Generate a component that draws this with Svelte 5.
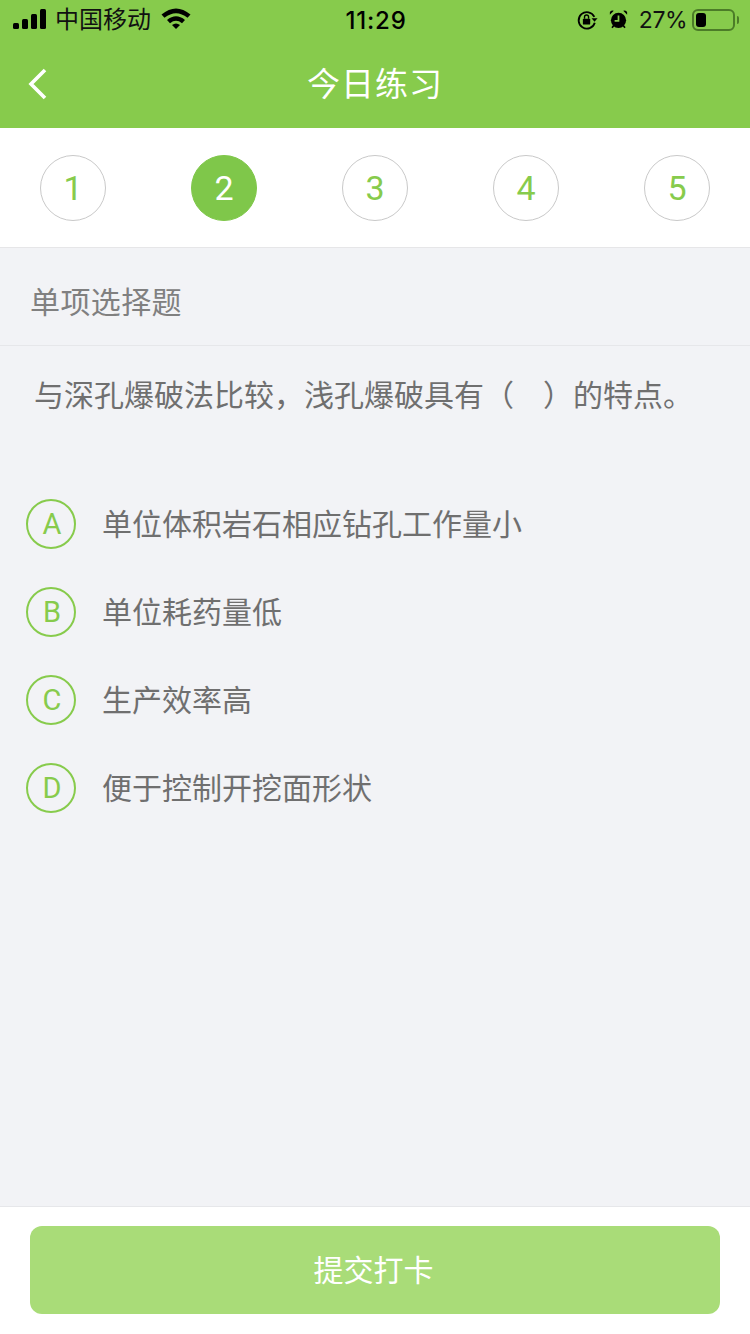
<script lang="ts">
  const steps = [1, 2, 3, 4, 5];
  const current = 2;
  const options = [
    { key: "A", text: "单位体积岩石相应钻孔工作量小" },
    { key: "B", text: "单位耗药量低" },
    { key: "C", text: "生产效率高" },
    { key: "D", text: "便于控制开挖面形状" },
  ];
</script>

<div class="page">
  <header class="head">
    <div class="status">
      <div class="status-left">
        <svg class="signal" width="34" height="20" viewBox="0 0 34 20">
          <rect x="0" y="14" width="6" height="6" rx="1.5" />
          <rect x="9" y="10" width="6" height="10" rx="1.5" />
          <rect x="18" y="5" width="6" height="15" rx="1.5" />
          <rect x="27" y="0" width="6" height="20" rx="1.5" />
        </svg>
        <span class="carrier">中国移动</span>
        <svg class="wifi" width="30" height="22" viewBox="0 0 30 22">
          <path d="M0.5 7.5 Q15 -4.5 29.5 7.5 L26.5 10.8 Q15 1.5 3.5 10.8Z" />
          <path d="M6 13 Q15 5.5 24 13 L21 16.2 Q15 11.5 9 16.2Z" />
          <path d="M11 18 Q15 15 19 18 L15 22Z" />
        </svg>
      </div>
      <span class="time">11:29</span>
      <div class="status-right">
        <svg width="22" height="22" viewBox="0 0 24 24" class="lock">
          <path d="M20 8.5 A9 9 0 1 0 20.5 15" fill="none" stroke="#000" stroke-width="2" />
          <path d="M17 10 L23.5 10 L20.2 14Z" />
          <rect x="7.5" y="10.5" width="8" height="6.5" rx="1" />
          <path d="M9.3 10.5 V8.8 A2.2 2.2 0 0 1 13.7 8.8 V10.5" fill="none" stroke="#000" stroke-width="1.5" />
        </svg>
        <svg width="19" height="21" viewBox="0 0 22 24" class="alarm">
          <circle cx="11" cy="13" r="8.8" />
          <path d="M1 6.5 L5.5 2 Q2 1 1 3.5Z M21 6.5 L16.5 2 Q20 1 21 3.5Z" />
          <path d="M3.5 21.5 L5.5 19 M18.5 21.5 L16.5 19" stroke="#000" stroke-width="2" />
          <path d="M11 7.5 V13.5 H6.5" fill="none" stroke="#87cb4c" stroke-width="2" />
        </svg>
        <span class="pct">27%</span>
        <div class="battery"><i class="level"></i></div>
        <i class="nub"></i>
      </div>
    </div>
    <div class="nav">
      <svg class="back" width="20" height="32" viewBox="0 0 20 32">
        <path d="M17 2 L3 16 L17 30" fill="none" stroke="#fff" stroke-width="3.6" />
      </svg>
      <span class="title">今日练习</span>
    </div>
  </header>

  <div class="steps">
    {#each steps as n}
      <span class="step" class:on={n === current}>{n}</span>
    {/each}
  </div>

  <main class="body">
    <div class="kind"><span>单项选择题</span></div>
    <p class="question">与深孔爆破法比较，浅孔爆破具有（<span class="blank"></span>）的特点。</p>
    <ul class="options">
      {#each options as o}
        <li class="option">
          <span class="letter">{o.key}</span>
          <span class="text">{o.text}</span>
        </li>
      {/each}
    </ul>
  </main>

  <footer class="foot">
    <button class="submit">提交打卡</button>
  </footer>
</div>

<style>
  :global(body) { margin: 0; }
  .page {
    position: relative;
    width: 750px;
    height: 1334px;
    display: flex;
    flex-direction: column;
    background: #f2f3f6;
    font-family: "Inter", "Noto Sans CJK SC", sans-serif;
    overflow: hidden;
  }
  .head { height: 128px; background: #87cb4c; flex: none; }
  .status {
    height: 40px;
    display: grid;
    grid-template-columns: 1fr auto 1fr;
    align-items: center;
    padding: 0 11px 0 13px;
    color: #000;
  }
  .status-left { display: flex; align-items: center; }
  .signal { fill: #000; margin-top: -2px; }
  .carrier { font-size: 24px; margin-left: 8px; color: #111; line-height: 40px; }
  .wifi { fill: #000; margin-left: 10px; margin-top: -4px; }
  .time { font-size: 24px; font-weight: 500; letter-spacing: 0.8px; }
  .status-right { display: flex; align-items: center; justify-content: flex-end; }
  .lock { fill: #000; }
  .alarm { fill: #000; margin-left: 11px; margin-top: -2px; }
  .pct { font-size: 23px; margin-left: 11px; color: #111; letter-spacing: -0.5px; }
  .battery {
    width: 43px;
    height: 22px;
    margin-left: 5px;
    border: 2px solid #4c7c28;
    border-radius: 6px;
    padding: 2px;
    box-sizing: border-box;
    display: flex;
  }
  .level { width: 10px; background: #000; border-radius: 3px; }
  .nub { width: 2px; height: 8px; margin-left: 2px; background: #4c7c28; border-radius: 0 2px 2px 0; }
  .nav { position: relative; height: 88px; display: flex; align-items: center; justify-content: center; margin-top: -2px; }
  .back { position: absolute; left: 28px; top: 30px; }
  .title { color: #fff; font-size: 33px; letter-spacing: 1px; }
  .steps {
    height: 120px;
    flex: none;
    box-sizing: border-box;
    background: #fff;
    border-bottom: 1px solid #e6e6e8;
    padding: 27px 40px 0;
    display: flex;
    justify-content: space-between;
    align-items: flex-start;
  }
  .step {
    width: 66px;
    height: 66px;
    box-sizing: border-box;
    border: 1px solid #c9c9c9;
    border-radius: 50%;
    display: flex;
    align-items: center;
    justify-content: center;
    color: #87cb4c;
    font-size: 34px;
    font-family: "Roboto", sans-serif;
  }
  .step.on { background: #7fc74a; border-color: #7fc74a; color: #fff; }
  .body { flex: 1; min-height: 0; }
  .kind {
    height: 98px;
    box-sizing: border-box;
    padding: 6px 0 0 30px;
    border-bottom: 1px solid #e6e7ea;
    display: flex;
    align-items: center;
    color: #808080;
    font-size: 30px;
    letter-spacing: 0.4px;
  }
  .question {
    margin: 0;
    padding: 27px 0 0 34px;
    color: #6f6f6f;
    font-size: 30px;
    line-height: 44px;
    white-space: nowrap;
  }
  .blank { display: inline-block; width: 29px; }
  .options { list-style: none; margin: 0; padding: 82px 0 0 26px; }
  .option { display: flex; align-items: center; height: 50px; margin-bottom: 38px; }
  .letter {
    width: 50px;
    height: 50px;
    box-sizing: border-box;
    padding-left: 2px;
    border: 2px solid #87cb4c;
    border-radius: 50%;
    display: flex;
    align-items: center;
    justify-content: center;
    color: #87cb4c;
    font-size: 29px;
    font-family: "Roboto", sans-serif;
  }
  .text { margin-left: 26px; padding-bottom: 4px; color: #6f6f6f; font-size: 30px; }
  .foot {
    flex: none;
    height: 128px;
    box-sizing: border-box;
    background: #fff;
    border-top: 1px solid #e6e7ea;
    padding: 19px 30px 0;
  }
  .submit {
    width: 100%;
    height: 88px;
    border: 0;
    border-radius: 12px;
    background: #a9dc78;
    color: #fff;
    font-size: 30px;
    font-family: inherit;
    padding: 0 3px 4px 0;
  }
</style>
